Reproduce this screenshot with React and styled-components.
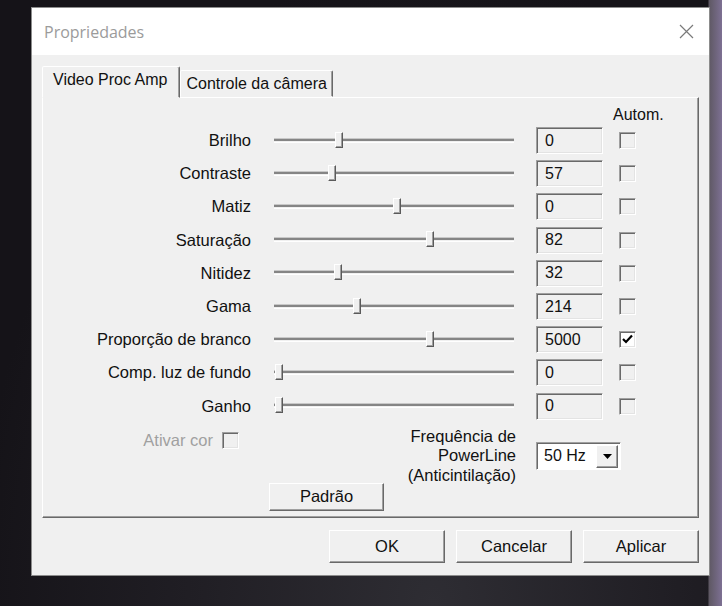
import React from 'react';
import styled, { createGlobalStyle } from 'styled-components';

const GlobalStyle = createGlobalStyle`
body{
  margin:0;
  background:#17151b;
  font-family:'Liberation Sans', Arial, sans-serif;
}
`;

const Screen = styled.div`
width:722px;
height:606px;
box-sizing:border-box;
padding:7px 0 0 31px;
overflow:hidden;
background:
  linear-gradient(90deg, rgba(0,0,0,0) 0, rgba(0,0,0,0) 708px, #5e5863 709px, #7d7093 722px),
  radial-gradient(ellipse at 60% 100%, #2e2d33 0, #201e24 40%, #151318 75%);
`;

const Dialog = styled.div`
width:679px;
height:569px;
box-sizing:border-box;
background:#f0f0f0;
border:1px solid #8c8c8c;
display:flex;
flex-direction:column;
`;

const TitleBar = styled.div`
height:47px;
flex:none;
background:#fff;
display:flex;
align-items:center;
justify-content:space-between;
padding:0 15px 0 12px;
`;

const Title = styled.div`
font-family:'Open Sans', 'Noto Sans', sans-serif;
font-size:16px;
color:#9b9b9b;
margin-top:1px;
`;

const Body = styled.div`
flex:1;
padding:11px 10px 0 10px;
display:flex;
flex-direction:column;
`;

const TabStrip = styled.div`
display:flex;
align-items:flex-end;
height:31px;
position:relative;
z-index:1;
`;

const Tab = styled.div`
box-sizing:border-box;
height:${p => (p.active ? '32px' : '27px')};
padding:0 ${p => (p.active ? '12px' : '5px')} 0 ${p => (p.active ? '10px' : '5px')};
margin-bottom:${p => (p.active ? '-1px' : '0')};
background:#f0f0f0;
border:1px solid;
border-color:#fff #696969 transparent #fff;
box-shadow:inset -1px 0 0 #a0a0a0;
border-radius:2px 2px 0 0;
font-size:16px;
color:#111;
display:flex;
align-items:center;
padding-bottom:${p => (p.active ? '4px' : '0')};
`;

const Panel = styled.div`
box-sizing:border-box;
height:421px;
border:1px solid;
border-color:#fff #696969 #696969 #fff;
box-shadow:inset -1px -1px 0 #a0a0a0;
padding-top:7px;
font-size:16px;
color:#111;
`;

const HeaderRow = styled.div`
height:19px;
padding-left:570px;
display:flex;
align-items:center;
`;

const Row = styled.div`
height:33.2px;
display:flex;
align-items:center;
`;

const Label = styled.div`
width:208px;
text-align:right;
font-size:16.5px;
white-space:nowrap;
`;

const Track = styled.div`
position:relative;
width:240px;
height:4px;
margin-left:23px;
box-sizing:border-box;
border-top:2px solid #858585;
border-bottom:1px solid #fff;
box-shadow:0 -1px 0 #c8c8c8;
`;

const Thumb = styled.div`
position:absolute;
top:-9px;
width:8px;
height:16px;
box-sizing:border-box;
background:#f0f0f0;
border:1px solid;
border-color:#fff #5a5a5a #5a5a5a #fff;
box-shadow:inset -1px -1px 0 #a0a0a0;
`;

const ValueBox = styled.div`
width:67px;
height:27px;
margin-left:22px;
box-sizing:border-box;
border:1px solid;
border-color:#a0a0a0 #fff #fff #a0a0a0;
box-shadow:inset 1px 1px 0 #696969, inset -1px -1px 0 #e3e3e3;
padding-left:8px;
display:flex;
align-items:center;
font-size:16px;
`;

const Check = styled.div`
width:17px;
height:17px;
margin-left:${p => p.gap ?? 16}px;
box-sizing:border-box;
border:1px solid;
border-color:#a0a0a0 #fff #fff #a0a0a0;
box-shadow:inset 1px 1px 0 #696969, inset -1px -1px 0 #e3e3e3;
background:${p => (p.checked ? '#fff' : '#f0f0f0')};
display:flex;
align-items:center;
justify-content:center;
`;

const BottomArea = styled.div`
display:flex;
`;

const LeftCol = styled.div`
width:352px;
display:flex;
flex-direction:column;
`;

const AtivarRow = styled.div`
width:196px;
margin-top:8px;
display:flex;
justify-content:flex-end;
align-items:center;
color:#a0a0a0;
font-size:16.5px;
`;

const RaisedButton = styled.div`
box-sizing:border-box;
width:${p => p.w}px;
height:${p => p.h}px;
background:#f0f0f0;
border:1px solid;
border-color:#fff #696969 #696969 #fff;
box-shadow:inset -1px -1px 0 #a0a0a0;
display:flex;
align-items:center;
justify-content:center;
font-size:16.5px;
color:#111;
`;

const PadraoWrap = styled.div`
margin:33px 0 0 226px;
`;

const FreqLabel = styled.div`
width:121px;
margin-top:4px;
text-align:right;
line-height:19.5px;
font-size:16.5px;
white-space:nowrap;
`;

const Combo = styled.div`
box-sizing:border-box;
width:85px;
height:28px;
margin:19px 0 0 20px;
background:#fff;
border:1px solid;
border-color:#a0a0a0 #fff #fff #a0a0a0;
box-shadow:inset 1px 1px 0 #696969;
display:flex;
align-items:center;
justify-content:space-between;
padding:2px 2px 1px 7px;
font-size:16px;
`;

const ComboButton = styled.div`
box-sizing:border-box;
width:22px;
height:100%;
background:#f0f0f0;
border:1px solid;
border-color:#fff #696969 #696969 #fff;
box-shadow:inset -1px -1px 0 #a0a0a0;
display:flex;
align-items:center;
justify-content:center;
`;

const ButtonRow = styled.div`
display:flex;
justify-content:flex-end;
gap:11px;
margin-top:12px;
`;

const rows = [
  { label: 'Brilho', value: '0', pos: 65 },
  { label: 'Contraste', value: '57', pos: 58 },
  { label: 'Matiz', value: '0', pos: 123 },
  { label: 'Saturação', value: '82', pos: 156 },
  { label: 'Nitidez', value: '32', pos: 64 },
  { label: 'Gama', value: '214', pos: 83 },
  { label: 'Proporção de branco', value: '5000', pos: 156, auto: true },
  { label: 'Comp. luz de fundo', value: '0', pos: 5 },
  { label: 'Ganho', value: '0', pos: 5 },
];

const CheckMark = () => (
  <svg width="11" height="11" viewBox="0 0 11 11">
    <path d="M1 5 L4 8 L10 1.5" fill="none" stroke="#000" strokeWidth="2.2" />
  </svg>
);

export default function App() {
  return (
    <Screen>
      <GlobalStyle />
      <Dialog>
        <TitleBar>
          <Title>Propriedades</Title>
          <svg width="15" height="15" viewBox="0 0 15 15">
            <path d="M1 1 L14 14 M14 1 L1 14" stroke="#7a7a7a" strokeWidth="1.2" />
          </svg>
        </TitleBar>
        <Body>
          <TabStrip>
            <Tab active>Video Proc Amp</Tab>
            <Tab>Controle da câmera</Tab>
          </TabStrip>
          <Panel>
            <HeaderRow>Autom.</HeaderRow>
            {rows.map(r => (
              <Row key={r.label}>
                <Label>{r.label}</Label>
                <Track>
                  <Thumb style={{ left: r.pos - 4 }} />
                </Track>
                <ValueBox>{r.value}</ValueBox>
                <Check checked={r.auto}>{r.auto && <CheckMark />}</Check>
              </Row>
            ))}
            <BottomArea>
              <LeftCol>
                <AtivarRow>
                  Ativar cor
                  <Check gap={9} />
                </AtivarRow>
                <PadraoWrap>
                  <RaisedButton w={115} h={28}>Padrão</RaisedButton>
                </PadraoWrap>
              </LeftCol>
              <FreqLabel>
                Frequência de
                <br />
                PowerLine
                <br />
                (Anticintilação)
              </FreqLabel>
              <Combo>
                50 Hz
                <ComboButton>
                  <svg width="9" height="5" viewBox="0 0 9 5">
                    <path d="M0 0 L9 0 L4.5 5 Z" fill="#000" />
                  </svg>
                </ComboButton>
              </Combo>
            </BottomArea>
          </Panel>
          <ButtonRow>
            <RaisedButton w={116} h={33}>OK</RaisedButton>
            <RaisedButton w={116} h={33}>Cancelar</RaisedButton>
            <RaisedButton w={116} h={33}>Aplicar</RaisedButton>
          </ButtonRow>
        </Body>
      </Dialog>
    </Screen>
  );
}
